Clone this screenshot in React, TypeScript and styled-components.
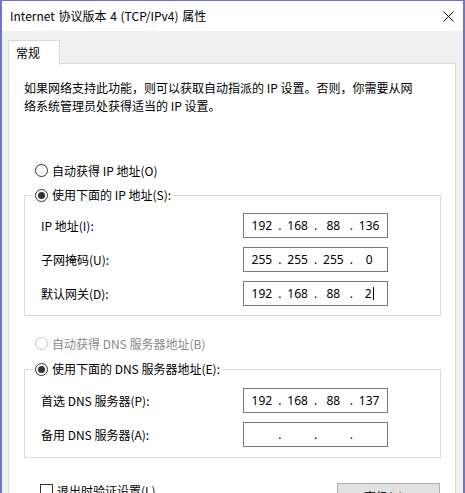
import React from 'react';
import styled, { createGlobalStyle } from 'styled-components';

const Global = createGlobalStyle`
  html, body { margin: 0; padding: 0; background: #ffffff; }
  body {
    font-family: "Noto Sans CJK SC", "Noto Sans", sans-serif;
    font-size: 12px;
    color: #000;
  }
  * { box-sizing: border-box; }
`;

const Window = styled.div`
  width: 465px;
  height: 493px;
  border: 2px solid #7474c4;
  border-top: 1px solid #7474c4;
  border-bottom: none;
  display: flex;
  flex-direction: column;
  overflow: hidden;
  background: #f0f0f0;
`;

const TitleBar = styled.div`
  height: 30px;
  flex: none;
  background: #ffffff;
  display: flex;
  align-items: center;
  justify-content: space-between;
  padding-left: 8px;
`;

const Title = styled.div`
  font-size: 12px;
  line-height: 18px;
  white-space: nowrap;
  word-spacing: 1px;
`;

const CloseButton = styled.div`
  width: 30px;
  height: 30px;
  display: flex;
  align-items: center;
  justify-content: center;
`;

const Body = styled.div`
  flex: 1;
  display: flex;
  flex-direction: column;
  padding: 9px 7px 0 6px;
`;

const TabStrip = styled.div`
  display: flex;
  height: 24px;
  position: relative;
  z-index: 1;
  margin-bottom: -1px;
`;

const Tab = styled.div`
  width: 52px;
  height: 25px;
  background: #ffffff;
  border: 1px solid #d9d9d9;
  border-bottom: none;
  padding: 3px 0 0 7px;
  line-height: 18px;
`;

const Panel = styled.div`
  flex: 1;
  background: #ffffff;
  border: 1px solid #d9d9d9;
  border-bottom: none;
  padding: 15px 14px 0 15px;
  display: flex;
  flex-direction: column;
`;

const Description = styled.div`
  line-height: 18px;
  span { display: block; white-space: nowrap; }
`;

const RadioRow = styled.label<{ $top: number; $disabled?: boolean }>`
  display: flex;
  align-items: center;
  height: 18px;
  margin-top: ${p => p.$top}px;
  padding-left: 11px;
  color: ${p => (p.$disabled ? '#8a8a8a' : '#000')};
  white-space: nowrap;
`;

const RadioCircle = styled.span<{ $checked?: boolean; $disabled?: boolean }>`
  width: 13px;
  height: 13px;
  border-radius: 50%;
  border: 1px solid ${p => (p.$disabled ? '#c4c4c4' : '#333333')};
  background: #ffffff;
  display: flex;
  align-items: center;
  justify-content: center;
  margin-right: 4px;
  flex: none;
  &::after {
    content: '';
    display: ${p => (p.$checked ? 'block' : 'none')};
    width: 7px;
    height: 7px;
    border-radius: 50%;
    background: #333333;
  }
`;

const Group = styled.fieldset<{ $top: number }>`
  margin: ${p => p.$top}px 0 0 0;
  padding: 0;
  border: 1px solid #dcdcdc;
  min-width: 0;
  width: 417px;
`;

const Legend = styled.legend`
  margin-left: 8px;
  padding: 0 2px;
  line-height: 18px;
  height: 18px;
  display: flex;
  align-items: center;
  white-space: nowrap;
`;

const Rows = styled.div<{ $pt: number; $pb: number }>`
  display: grid;
  grid-template-columns: 1fr 145px;
  row-gap: 9px;
  padding: ${p => p.$pt}px 52px ${p => p.$pb}px 16px;
  align-items: center;
`;

const FieldLabel = styled.div`
  line-height: 18px;
  white-space: nowrap;
`;

const IpBox = styled.div`
  height: 25px;
  border: 1px solid #7a7a7a;
  background: #ffffff;
  display: flex;
  align-items: center;
`;

const Octet = styled.span`
  flex: 1;
  text-align: center;
  font-family: "Noto Sans", sans-serif;
  font-size: 12px;
  line-height: 18px;
  display: flex;
  justify-content: center;
  align-items: center;
`;

const Dot = styled.span`
  width: 0;
  display: flex;
  justify-content: center;
  font-family: "Noto Sans", sans-serif;
  font-size: 12px;
  line-height: 18px;
`;

const Caret = styled.span`
  display: inline-block;
  width: 1px;
  height: 13px;
  background: #000;
  margin-left: 1px;
`;

const BottomRow = styled.div`
  width: 417px;
  margin-top: 25px;
  display: flex;
  justify-content: space-between;
  align-items: flex-start;
  padding-left: 16px;
`;

const CheckRow = styled.label`
  display: flex;
  align-items: flex-start;
  margin-top: 1px;
  white-space: nowrap;
  line-height: 18px;
`;

const CheckBox = styled.span`
  width: 13px;
  height: 13px;
  border: 1px solid #333333;
  background: #fff;
  margin-right: 4px;
  margin-top: 0;
  flex: none;
`;

const CheckText = styled.span`
  margin-top: -2px;
`;

const Button = styled.div`
  width: 103px;
  height: 23px;
  background: #e1e1e1;
  border: 1px solid #adadad;
  display: flex;
  align-items: center;
  justify-content: center;
  padding-top: 5px;
  line-height: 18px;
  margin-right: 1px;
`;

function IpField({ parts, caret }: { parts: string[]; caret?: boolean }) {
  return (
    <IpBox>
      {parts.map((p, i) => (
        <React.Fragment key={i}>
          {i > 0 && <Dot>.</Dot>}
          <Octet>
            {p}
            {caret && i === parts.length - 1 && <Caret />}
          </Octet>
        </React.Fragment>
      ))}
    </IpBox>
  );
}

export default function App() {
  return (
    <>
      <Global />
      <Window>
        <TitleBar>
          <Title>Internet 协议版本 4 (TCP/IPv4) 属性</Title>
          <CloseButton>
            <svg width="11" height="11" viewBox="0 0 11 11">
              <path d="M0.5 0.5 L10.5 10.5 M10.5 0.5 L0.5 10.5" stroke="#000" strokeWidth="1" fill="none" />
            </svg>
          </CloseButton>
        </TitleBar>
        <Body>
          <TabStrip>
            <Tab>常规</Tab>
          </TabStrip>
          <Panel>
            <Description>
              <span>如果网络支持此功能，则可以获取自动指派的 IP 设置。否则，你需要从网</span>
              <span>络系统管理员处获得适当的 IP 设置。</span>
            </Description>

            <RadioRow $top={46}>
              <RadioCircle />
              自动获得 IP 地址(O)
            </RadioRow>

            <Group $top={7}>
              <Legend>
                <RadioCircle $checked />
                使用下面的 IP 地址(S):
              </Legend>
              <Rows $pt={9} $pb={9}>
                <FieldLabel>IP 地址(I):</FieldLabel>
                <IpField parts={['192', '168', '88', '136']} />
                <FieldLabel>子网掩码(U):</FieldLabel>
                <IpField parts={['255', '255', '255', '0']} />
                <FieldLabel>默认网关(D):</FieldLabel>
                <IpField parts={['192', '168', '88', '2']} caret />
              </Rows>
            </Group>

            <RadioRow $top={18} $disabled>
              <RadioCircle $disabled />
              自动获得 DNS 服务器地址(B)
            </RadioRow>

            <Group $top={8}>
              <Legend>
                <RadioCircle $checked />
                使用下面的 DNS 服务器地址(E):
              </Legend>
              <Rows $pt={10} $pb={10}>
                <FieldLabel>首选 DNS 服务器(P):</FieldLabel>
                <IpField parts={['192', '168', '88', '137']} />
                <FieldLabel>备用 DNS 服务器(A):</FieldLabel>
                <IpField parts={['', '', '', '']} />
              </Rows>
            </Group>

            <BottomRow>
              <CheckRow>
                <CheckBox />
                <CheckText>退出时验证设置(L)</CheckText>
              </CheckRow>
              <Button>高级(V)...</Button>
            </BottomRow>
          </Panel>
        </Body>
      </Window>
    </>
  );
}
